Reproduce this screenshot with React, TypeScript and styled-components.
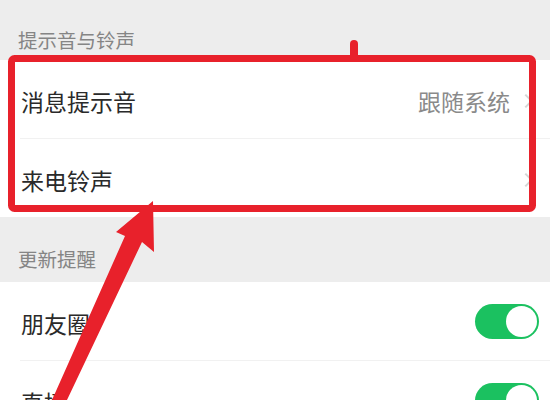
import React from 'react'
import styled, { createGlobalStyle } from 'styled-components'

const Global = createGlobalStyle`
    html, body { margin: 0; padding: 0; background: #ededed; }
    body {
        font-family: "Noto Sans CJK SC", "Noto Sans", sans-serif;
        -webkit-font-smoothing: antialiased;
    }
`

const Page = styled.div`
    position: relative;
    width: 550px;
    height: 400px;
    overflow: hidden;
    background: #ededed;
    display: flex;
    flex-direction: column;
    > * { flex-shrink: 0; }
`

const SectionHeader = styled.div<{ $h: number; $pb: number }>`
    height: ${ p => p.$h }px;
    box-sizing: border-box;
    padding: 0 0 ${ p => p.$pb }px 18px;
    display: flex;
    align-items: flex-end;
    font-size: 19.5px;
    line-height: 26px;
    color: #858585;
`

const Group = styled.div`
    background: #ffffff;
    display: flex;
    flex-direction: column;
    > * { flex-shrink: 0; }
`

const Row = styled.div`
    height: 78px;
    display: flex;
    align-items: center;
    padding: 0 11px 0 21px;
    font-size: 23px;
    color: #2a2a2a;
`

const Title = styled.span`
    flex: 1;
    margin-top: 3px;
`

const Value = styled.span`
    color: #8a8a8a;
    margin-top: 3px;
`

const Chevron = styled.span`
    width: 8px;
    height: 8px;
    margin: 3px 8px 0 11px;
    border-top: 2px solid #d6d6d6;
    border-right: 2px solid #d6d6d6;
    transform: rotate(45deg);
`

const Divider = styled.div`
    height: 1px;
    margin-left: 20px;
    background: #f1f1f1;
`

const Toggle = styled.div<{ $on: boolean }>`
    width: 64px;
    height: 35px;
    box-sizing: border-box;
    border-radius: 18px;
    background: ${ p => p.$on ? '#1bc160' : '#e5e5e5' };
    display: flex;
    justify-content: ${ p => p.$on ? 'flex-end' : 'flex-start' };
    align-items: center;
    padding: 2px;
    &::after {
        content: '';
        width: 31px;
        height: 31px;
        border-radius: 50%;
        background: #ffffff;
    }
`

const Overlay = styled.svg`
    position: absolute;
    left: 0;
    top: 0;
    pointer-events: none;
`

const RED = '#e8212b'

export default function App() {
    return <>
        <Global />
        <Page>
            <SectionHeader $h={ 60 } $pb={ 7 }>提示音与铃声</SectionHeader>
            <Group>
                <Row>
                    <Title>消息提示音</Title>
                    <Value>跟随系统</Value>
                    <Chevron />
                </Row>
                <Divider />
                <Row>
                    <Title>来电铃声</Title>
                    <Chevron />
                </Row>
            </Group>
            <SectionHeader $h={ 65 } $pb={ 10 }>更新提醒</SectionHeader>
            <Group>
                <Row>
                    <Title>朋友圈</Title>
                    <Toggle $on />
                </Row>
                <Divider />
                <Row>
                    <Title>直播</Title>
                    <Toggle $on />
                </Row>
            </Group>
            <Overlay width="550" height="400" viewBox="0 0 550 400">
                <rect x="11.5" y="58.5" width="521" height="150" rx="3"
                    fill="none" stroke={ RED } strokeWidth="7" />
                <rect x="350" y="40" width="8" height="20" rx="4" fill={ RED } />
                <polygon fill={ RED }
                    points="153,201 154,252 142,242 67,400 52,400 125,236 116,232" />
            </Overlay>
        </Page>
    </>
}
